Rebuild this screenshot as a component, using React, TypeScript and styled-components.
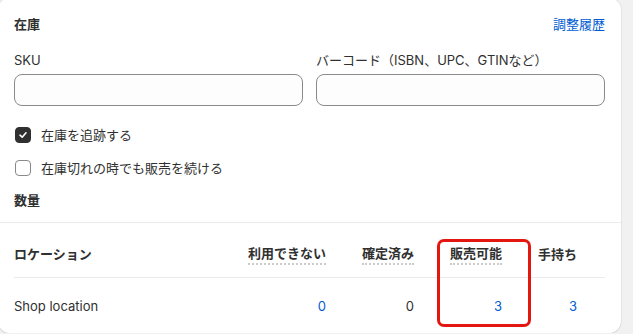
import styled, { createGlobalStyle } from "styled-components";

const GlobalStyle = createGlobalStyle`
  body {
    margin: 0;
    background: #f1f1f1;
    font-family: "Inter", "Noto Sans CJK JP", sans-serif;
    font-size: 13px;
    color: #303030;
  }
`;

const Card = styled.div`
  position: relative;
  width: 623px;
  height: 335px;
  margin: -2px 0 0 -2px;
  background: #ffffff;
  border-radius: 12px;
  box-shadow: 0 1px 0 0 rgba(26, 26, 26, 0.07), 0 0 0 1px rgba(0, 0, 0, 0.05);
  overflow: hidden;
`;

const Section = styled.div`
  padding: 16px 16px 12px;
  border-bottom: 1px solid #ebebeb;
`;

const HeaderRow = styled.div`
  display: flex;
  justify-content: space-between;
  align-items: center;
  line-height: 20px;
`;

const Title = styled.h2`
  margin: 0;
  font-size: 13px;
  font-weight: 650;
  line-height: 20px;
`;

const Link = styled.a`
  color: #005bd3;
  text-decoration: none;
  cursor: pointer;
`;

const Fields = styled.div`
  display: grid;
  grid-template-columns: 1fr 1fr;
  gap: 13px;
  margin-top: 16px;
`;

const Field = styled.label`
  display: flex;
  flex-direction: column;
  gap: 4px;
  line-height: 20px;
`;

const Input = styled.input`
  box-sizing: border-box;
  height: 32px;
  width: 100%;
  border: 1px solid #8a8a8a;
  border-radius: 8px;
  background: #fdfdfd;
  font: inherit;
  padding: 0 12px;
`;

const Checks = styled.div`
  display: flex;
  flex-direction: column;
  gap: 13px;
  margin-top: 19px;
`;

const CheckRow = styled.label`
  display: flex;
  align-items: center;
  gap: 10px;
  line-height: 20px;
  padding-left: 1px;
`;

const Box = styled.span<{ $checked?: boolean }>`
  box-sizing: border-box;
  width: 16px;
  height: 16px;
  border-radius: 4px;
  display: flex;
  align-items: center;
  justify-content: center;
  background: ${(p) => (p.$checked ? "#303030" : "#ffffff")};
  border: 1px solid ${(p) => (p.$checked ? "#303030" : "#8a8a8a")};
`;

const SubTitle = styled(Title)`
  margin-top: 12px;
`;

const Table = styled.div`
  padding: 0 16px;
`;

const Row = styled.div<{ $head?: boolean }>`
  display: grid;
  grid-template-columns: 1fr 78px 52px 52px 39px;
  column-gap: 36px;
  align-items: center;
  padding: ${(p) => (p.$head ? "20px 28px 12px 0" : "18px 28px 17px 0")};
  border-bottom: ${(p) => (p.$head ? "1px solid #ebebeb" : "none")};
  line-height: 20px;
  font-weight: ${(p) => (p.$head ? 600 : 400)};
  white-space: nowrap;
`;

const Cell = styled.span<{ $blue?: boolean }>`
  text-align: right;
  color: ${(p) => (p.$blue ? "#005bd3" : "#303030")};
`;

const Dotted = styled.span`
  display: inline-block;
  border-bottom: 2px dotted #cccccc;
`;

const Highlight = styled.div`
  position: absolute;
  left: 439px;
  top: 241px;
  width: 94px;
  height: 88px;
  box-sizing: border-box;
  border: 3px solid #e3170f;
  border-radius: 7px;
  pointer-events: none;
`;

function Check() {
  return (
    <svg width="10" height="10" viewBox="0 0 10 10">
      <path d="M2 5.2 L4.2 7.2 L8 2.8" fill="none" stroke="#fff" strokeWidth="1.6" strokeLinecap="round" strokeLinejoin="round" />
    </svg>
  );
}

export default function App() {
  return (
    <>
      <GlobalStyle />
      <Card>
        <Section>
          <HeaderRow>
            <Title>在庫</Title>
            <Link>調整履歴</Link>
          </HeaderRow>
          <Fields>
            <Field>
              SKU
              <Input />
            </Field>
            <Field>
              バーコード（ISBN、UPC、GTINなど）
              <Input />
            </Field>
          </Fields>
          <Checks>
            <CheckRow>
              <Box $checked>
                <Check />
              </Box>
              在庫を追跡する
            </CheckRow>
            <CheckRow>
              <Box />
              在庫切れの時でも販売を続ける
            </CheckRow>
          </Checks>
          <SubTitle>数量</SubTitle>
        </Section>
        <Table>
          <Row $head>
            <span>ロケーション</span>
            <Cell><Dotted>利用できない</Dotted></Cell>
            <Cell><Dotted>確定済み</Dotted></Cell>
            <Cell><Dotted>販売可能</Dotted></Cell>
            <Cell>手持ち</Cell>
          </Row>
          <Row>
            <span>Shop location</span>
            <Cell $blue>0</Cell>
            <Cell>0</Cell>
            <Cell $blue>3</Cell>
            <Cell $blue>3</Cell>
          </Row>
        </Table>
        <Highlight />
      </Card>
    </>
  );
}
